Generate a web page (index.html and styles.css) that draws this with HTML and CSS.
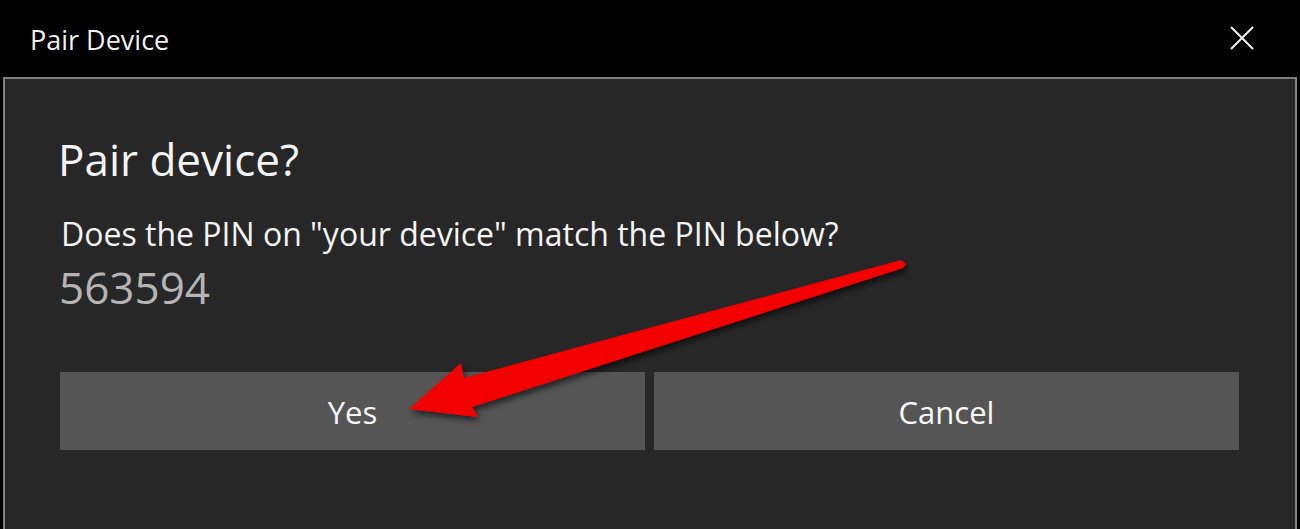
FILE: index.html
```html
<!DOCTYPE html>
<html lang="en">

<head>
    <meta charset="UTF-8">
    <link rel="stylesheet" href="styles.css">
</head>

<body>

    <div class="window">
        <div class="titlebar">
            <span class="title">Pair Device</span>
            <svg class="close" width="24" height="24" viewBox="0 0 24 24">
                <path d="M1 1 L23 23 M23 1 L1 23" stroke="#f2f2f2" stroke-width="2" fill="none" />
            </svg>
        </div>

        <div class="panel">
            <h1>Pair device?</h1>
            <p class="question">Does the PIN on "your device" match the PIN below?</p>
            <p class="pin">563594</p>

            <div class="buttons">
                <button>Yes</button>
                <button>Cancel</button>
            </div>
        </div>

        <!-- red annotation arrow pointing at Yes -->
        <svg class="arrow" width="1300" height="529" viewBox="0 0 1300 529">
            <defs>
                <filter id="shadow" x="-10%" y="-20%" width="120%" height="160%">
                    <feDropShadow dx="2" dy="4" stdDeviation="3" flood-color="#000" flood-opacity="0.6" />
                </filter>
            </defs>
            <polygon points="409,409 461,363 464,378 901,260 906,264 903,268 472,407 478,417" fill="#f50000" filter="url(#shadow)" />
        </svg>
    </div>

</body>

</html>
```

FILE: styles.css
```css
body {
    margin: 0;
    font-family: "Open Sans", "Noto Sans", sans-serif;
    background-color: #000;
}

.window {
    position: relative;
    width: 1300px;
    height: 529px;
    background-color: #000;
    display: flex;
    flex-direction: column;
    overflow: hidden;
}

.titlebar {
    height: 77px;
    display: flex;
    align-items: center;
    justify-content: space-between;
    padding: 0 46px 0 30px;
}

.title {
    color: #f0f0f0;
    font-size: 27px;
    margin-top: 2px;
}

.close {
    margin-top: -2px;
}

.panel {
    flex: 1;
    margin: 0 3px;
    border: 2px solid #808080;
    border-bottom: none;
    background-color: #272727;
    padding: 0 56px 0 55px;
}

h1 {
    margin: 50px 0 0 -2px;
    font-size: 44px;
    font-weight: normal;
    color: #f4f4f4;
    line-height: 60px;
}

.question {
    margin: 23px 0 0 1px;
    font-size: 32px;
    color: #f4f4f4;
    line-height: 44px;
}

.pin {
    margin: 6px 0 0 -1px;
    font-size: 44px;
    color: #b5b5b5;
    line-height: 50px;
}

.buttons {
    display: flex;
    gap: 9px;
    margin-top: 60px;
}

button {
    flex: 1;
    height: 78px;
    border: none;
    background-color: #555555;
    color: #f8f8f8;
    font-family: "Open Sans", "Noto Sans", sans-serif;
    font-size: 31px;
    padding: 2px 0 0;
}

.arrow {
    position: absolute;
    top: 0;
    left: 0;
}
```
